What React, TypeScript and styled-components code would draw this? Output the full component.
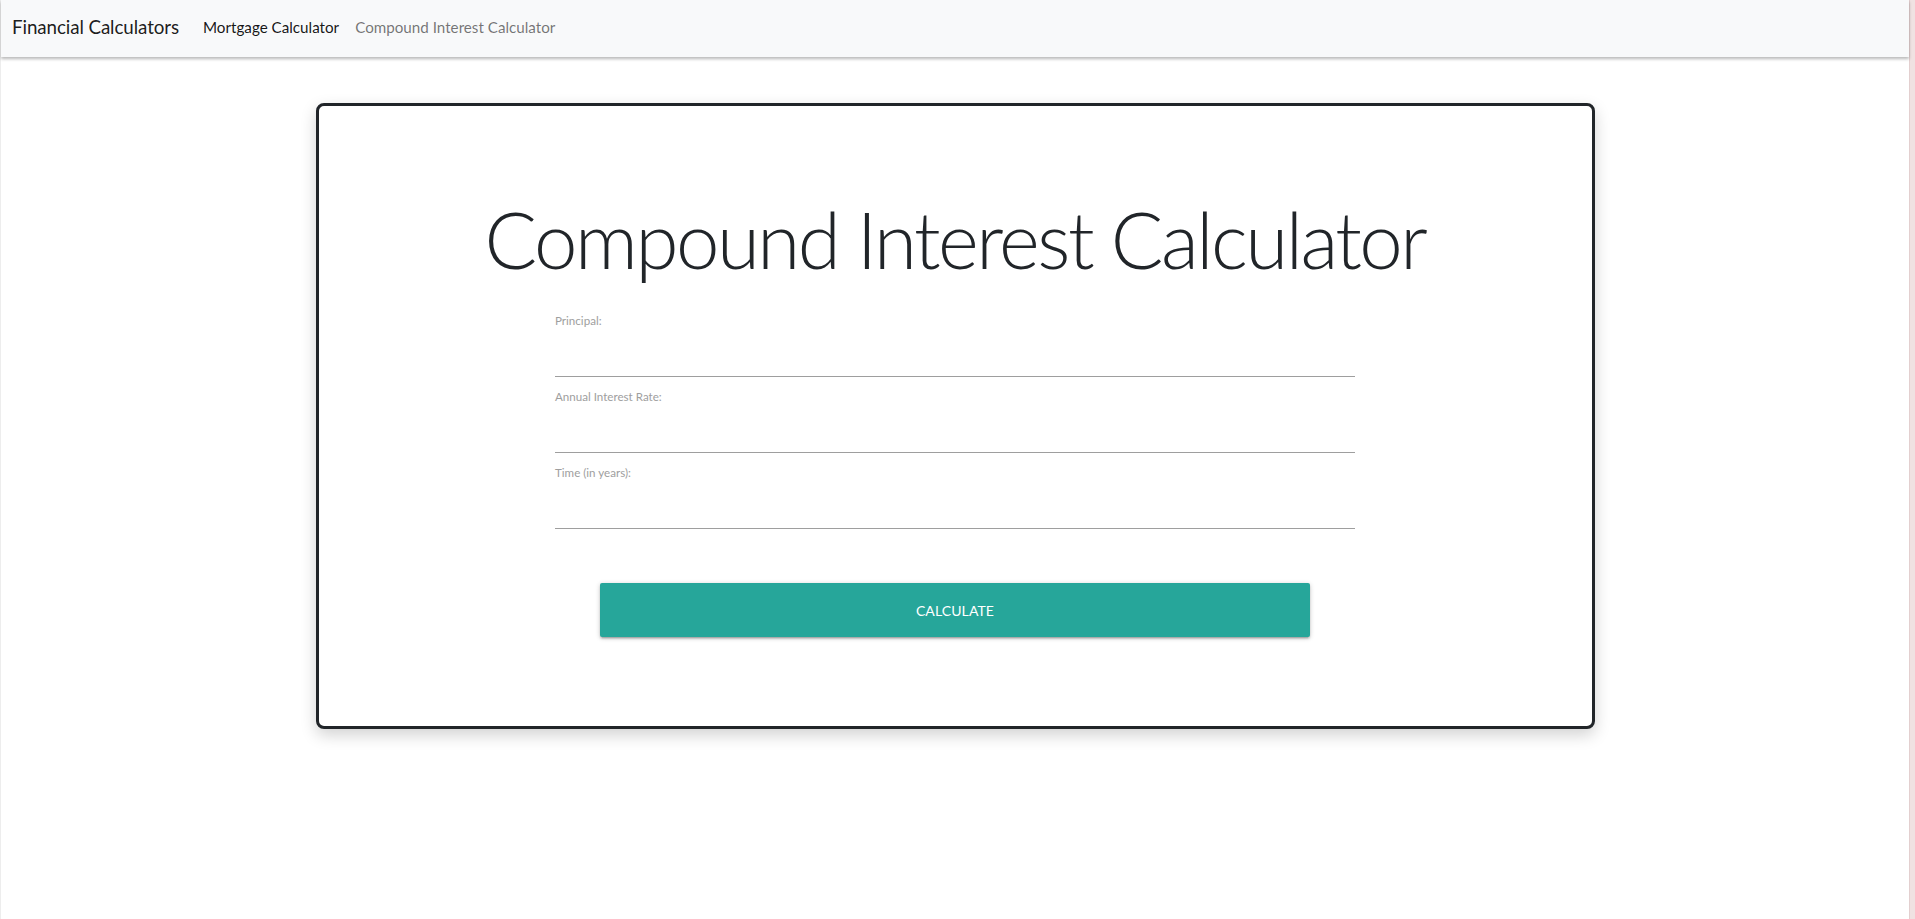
import React from "react";
import styled, { createGlobalStyle } from "styled-components";

const GlobalStyle = createGlobalStyle`
  html, body {
    margin: 0;
    padding: 0;
    background: #ffffff;
  }
  body {
    font-family: "Lato", "Open Sans", "Liberation Sans", sans-serif;
    color: #212529;
  }
  * { box-sizing: border-box; }
`;

const Frame = styled.div`
  display: flex;
  min-height: 919px;
`;

const Main = styled.div`
  flex: 1;
  border-left: 1px solid #ededed;
  display: flex;
  flex-direction: column;
`;

const EdgeStrip = styled.div`
  width: 6px;
  background: #f0e2e2;
  border-left: 1px solid #e3cfcf;
`;

const NavBar = styled.nav`
  height: 57px;
  background: #f8f9fa;
  box-shadow: 0 2px 3px rgba(0, 0, 0, 0.28);
  display: flex;
  align-items: center;
  padding: 0 11px 4px;
  position: relative;
  z-index: 1;
`;

const Brand = styled.a`
  font-size: 18.8px;
  letter-spacing: -0.1px;
  color: rgba(0, 0, 0, 0.9);
  margin-right: 16px;
  text-decoration: none;
  white-space: nowrap;
`;

const NavList = styled.div`
  display: flex;
  align-items: center;
`;

const NavLink = styled.a<{ $active?: boolean }>`
  font-size: 15.2px;
  padding: 0 8px;
  color: ${(p) => (p.$active ? "rgba(0,0,0,0.92)" : "rgba(0,0,0,0.55)")};
  text-decoration: none;
  white-space: nowrap;
`;

const Content = styled.main`
  padding-top: 46px;
  display: flex;
  justify-content: center;
`;

const Card = styled.section`
  width: 1279px;
  height: 626px;
  border: 3px solid #212529;
  border-radius: 8px;
  box-shadow: 0 6px 16px rgba(0, 0, 0, 0.18);
  background: #fff;
  display: flex;
  flex-direction: column;
  align-items: center;
  padding-top: 85px;
`;

const Title = styled.h1`
  margin: 0;
  font-size: 78px;
  line-height: 96px;
  letter-spacing: -2.5px;
  font-weight: 300;
  color: #212529;
  text-align: center;
`;

const Form = styled.form`
  width: 800px;
  margin-top: 26px;
  display: flex;
  flex-direction: column;
  align-items: center;
`;

const Field = styled.div`
  width: 100%;
  display: flex;
  flex-direction: column;
  margin-bottom: 12px;
`;

const Label = styled.label`
  font-size: 11.6px;
  line-height: 15px;
  color: #9e9e9e;
`;

const Input = styled.input`
  height: 49px;
  border: none;
  border-bottom: 1px solid #9e9e9e;
  outline: none;
  background: transparent;
  font-size: 16px;
  font-family: inherit;
  padding: 0;
`;

const Button = styled.button`
  margin-top: 42px;
  width: 710px;
  height: 54px;
  border: none;
  border-radius: 2px;
  background: #26a69a;
  color: #fff;
  font-family: inherit;
  font-size: 14px;
  letter-spacing: 0.1px;
  text-transform: uppercase;
  cursor: pointer;
  box-shadow: 0 2px 2px 0 rgba(0, 0, 0, 0.14), 0 3px 1px -2px rgba(0, 0, 0, 0.12),
    0 1px 5px 0 rgba(0, 0, 0, 0.2);
`;

const fields = ["Principal:", "Annual Interest Rate:", "Time (in years):"];

export default function App() {
  return (
    <>
      <GlobalStyle />
      <Frame>
        <Main>
          <NavBar>
            <Brand href="#">Financial Calculators</Brand>
            <NavList>
              <NavLink href="#" $active>
                Mortgage Calculator
              </NavLink>
              <NavLink href="#">Compound Interest Calculator</NavLink>
            </NavList>
          </NavBar>
          <Content>
            <Card>
              <Title>Compound Interest Calculator</Title>
              <Form onSubmit={(e) => e.preventDefault()}>
                {fields.map((f) => (
                  <Field key={f}>
                    <Label>{f}</Label>
                    <Input type="text" />
                  </Field>
                ))}
                <Button type="submit">Calculate</Button>
              </Form>
            </Card>
          </Content>
        </Main>
        <EdgeStrip />
      </Frame>
    </>
  );
}
